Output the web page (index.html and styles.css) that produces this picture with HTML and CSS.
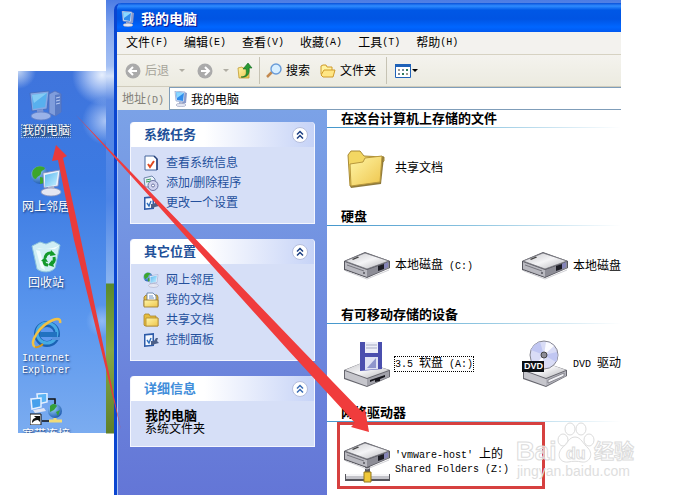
FILE: index.html
```html
<!DOCTYPE html>
<html lang="zh-CN">
<head>
    <meta charset="UTF-8">
    <meta name="viewport" content="width=device-width, initial-scale=1.0">
    <title>我的电脑</title>
    <link rel="stylesheet" href="styles.css">
</head>
<body>

    <!-- Shared icons -->
    <svg class="defs" aria-hidden="true">
        <defs>
            <linearGradient id="g-screen" x1="0" y1="0" x2="1" y2="1">
                <stop offset="0" stop-color="#5cb8f0"/>
                <stop offset="1" stop-color="#c8f0ff"/>
            </linearGradient>
            <linearGradient id="g-folder" x1="0" y1="0" x2="1" y2="1">
                <stop offset="0" stop-color="#fff6a8"/>
                <stop offset="1" stop-color="#eec54c"/>
            </linearGradient>
            <linearGradient id="g-metal" x1="0" y1="0" x2="1" y2="1">
                <stop offset="0" stop-color="#c4c4c8"/>
                <stop offset=".5" stop-color="#f4f4f6"/>
                <stop offset="1" stop-color="#b4b4b8"/>
            </linearGradient>
            <radialGradient id="g-globe" cx=".35" cy=".3" r=".8">
                <stop offset="0" stop-color="#9fd8ff"/>
                <stop offset="1" stop-color="#1450a8"/>
            </radialGradient>
        </defs>
        <symbol id="i-pc" viewBox="0 0 16 16">
            <path d="M10 1l4 1-1 10-4 1z" fill="#8c9ccc"/>
            <path d="M2 0l10 1-1 10-8-1z" fill="#dfe9fb" stroke="#7c90c0" stroke-width=".6"/>
            <path d="M3 1l8 1-1 8-6-1z" fill="#2f8cec"/>
            <path d="M3 1l8 1-7 5z" fill="#8cd8ff"/>
            <path d="M6 11l4 .5V14H6z" fill="#a4aecc"/>
            <ellipse cx="8" cy="14" rx="5" ry="1.700" fill="#e2e6f2" stroke="#8890b0" stroke-width=".5"/>
        </symbol>
        <symbol id="i-net" viewBox="0 0 32 32">
            <circle cx="10" cy="10" r="9" fill="url(#g-globe)"/>
            <path d="M3 5c4-5 9-4 12-2-1 3-4 2-4 5s-4 3-5 6c-3 0-5-5-3-9zM10 12l5 1-1 5-4 1z" fill="#3da62d"/>
            <path d="M13 8l17-3-2 16-14 2z" fill="#eef2fc" stroke="#8088b8" stroke-width=".8"/>
            <path d="M15 10l13-3-2 13-11 2z" fill="url(#g-screen)"/>
            <path d="M18 22l6-1 1 5h-7z" fill="#b8bfd8"/>
            <ellipse cx="21" cy="27" rx="10" ry="4" fill="#e4e6f2" stroke="#9096b8" stroke-width=".8"/>
        </symbol>
        <symbol id="i-folder" viewBox="0 0 16 16">
            <path d="M1 3.500l1-1.500h4l1 2h6v2h2v8H2L1 13z" fill="#e6bd3e" stroke="#a8842c" stroke-width=".8"/>
            <path d="M3 6h12v8H3z" fill="url(#g-folder)" stroke="#b08c30" stroke-width=".8"/>
        </symbol>
        <symbol id="i-panel" viewBox="0 0 16 16">
            <path d="M1 2l10-1v13L1 15z" fill="#2c5aa8"/>
            <path d="M2.500 3.500l7-.6v9.800l-7 .6z" fill="#f4f8ff"/>
            <path d="M4 8l2 3 2-5" fill="none" stroke="#2f6fbc" stroke-width="1.400"/>
            <path d="M8 9h3l2-3h2l-1 3 2 2-4 1-2 1H8z" fill="#4c6088"/>
        </symbol>
        <symbol id="i-drive" viewBox="0 0 48 30">
            <path d="M1 10L22 1l25 9v7L24 27 1 19z" fill="#56565e"/>
            <path d="M2 10l20-8 24 8-22 8z" fill="url(#g-metal)" stroke="#77777f" stroke-width=".8"/>
            <path d="M2 11l22 8v7L2 18z" fill="#b9b9c0"/>
            <path d="M24 19l22-8v6l-22 9z" fill="#8d8d96"/>
            <path d="M35 15l6-2v5l-6 2z" fill="#1c1c24"/>
            <path d="M41 13l4-2v5l-4 2z" fill="#8484b8"/>
            <path d="M9 8l6-2.500 1 1-6 2.500z" fill="#444"/>
            <path d="M4 14l17 6" stroke="#77777f" stroke-width="1"/>
            <circle cx="21" cy="22" r="1" fill="#55555c"/>
            <path d="M3 20l21 8 22-9" fill="none" stroke="#cfcfd4" stroke-width="1"/>
        </symbol>
        <symbol id="i-chevron" viewBox="0 0 16 16">
            <circle cx="8" cy="8" r="7.500" fill="#fff" stroke="#b4bddc" stroke-width="1"/>
            <path d="M5 7.500l3-3 3 3M5 11.500l3-3 3 3" fill="none" stroke="currentColor" stroke-width="1.500"/>
        </symbol>
    </svg>

    <div class="page">
        <div class="desktop">
            <div class="shortcut selected">
                <svg width="34" height="32" viewBox="0 0 34 32">
                    <path d="M20 5l6-3 6 3v18l-6 4-6-3z" fill="#7f9ddc" stroke="#5570b8" stroke-width=".8"/>
                    <path d="M26 6l6-1v18l-6 4z" fill="#587ac4"/>
                    <path d="M27 9l4-1M27 12l4-1M27 15l4-1" stroke="#b9ccf4" stroke-width="1"/>
                    <path d="M1 4l19-2-2 18-15 2z" fill="#86a8e4" stroke="#456ab8" stroke-width=".8"/>
                    <path d="M3 6l15-2-2 14-12 2z" fill="#58b0ee"/>
                    <path d="M3 6l15-2-13 10z" fill="#84cbf4"/>
                    <path d="M8 21l6-1 1 6H8z" fill="#7b95d4"/>
                    <ellipse cx="12" cy="27" rx="10" ry="4" fill="#9ab2e8" stroke="#6280c8" stroke-width=".8"/>
                </svg>
                <span>我的电脑</span>
            </div>
            <div class="shortcut">
                <svg width="32" height="32"><use href="#i-net"/></svg>
                <span>网上邻居</span>
            </div>
            <div class="shortcut">
                <svg width="32" height="32" viewBox="0 0 32 32">
                    <path d="M2 5l8-4 6 2 7-3 7 4-5 23c-4 5-13 5-18 1z" fill="#cfeef4" stroke="#8cc3dc" stroke-width="1"/>
                    <path d="M2 5c7 4 20 4 28-1l-5 4H9z" fill="#f4ffff"/>
                    <path d="M6 9l5 18 4 2-5-19z" fill="#f0fdff"/>
                    <g fill="none" stroke="#129a2b" stroke-width="3">
                        <path d="M15 17c1-5 5-6 8-4"/>
                        <path d="M24 16c1 4-1 6-3 7"/>
                        <path d="M18 24c-3 0-4-2-4-4"/>
                    </g>
                    <path d="M21 9l5 5-6 1zM22 19l-4 5 6 2zM11 20l4-4 3 5z" fill="#129a2b"/>
                </svg>
                <span>回收站</span>
            </div>
            <div class="shortcut">
                <svg width="32" height="32" viewBox="0 0 32 32">
                    <circle cx="17" cy="17" r="10" fill="none" stroke="#1b62b4" stroke-width="6"/>
                    <circle cx="17" cy="16" r="10" fill="none" stroke="#46aae4" stroke-width="3"/>
                    <path d="M10 15h17v5H10z" fill="#2272c0"/>
                    <path d="M22 20h8v3h-8z" fill="#5a94e0"/>
                    <path d="M5 30C-2 26 10 8 23 3c5-2 8-1 7 3" fill="none" stroke="#f2c144" stroke-width="2.500"/>
                    <path d="M5 30c3 1 6-1 8-3" fill="none" stroke="#d49a20" stroke-width="2"/>
                </svg>
                <span class="latin">Internet<br>Explorer</span>
            </div>
            <div class="shortcut">
                <svg width="32" height="32" viewBox="0 0 32 32">
                    <path d="M18 6h7v7M12 28h8" fill="none" stroke="#111" stroke-width="1.500"/>
                    <path d="M7 1l10-1v9L8 11z" fill="#5cb4f4" stroke="#e4efff" stroke-width="1.500"/>
                    <path d="M1 6l10-1v9L2 16z" fill="#46a0ec" stroke="#e4efff" stroke-width="1.500"/>
                    <path d="M3 17l11-2 2 3-11 2z" fill="#dfe4f4"/>
                    <circle cx="25" cy="18" r="7" fill="url(#g-globe)"/>
                    <path d="M20 13c3-3 6-2 7 0l-3 4-4 2zM26 19l4-2-2 6z" fill="#35a03a"/>
                    <path d="M19 28h13M25 25v3" stroke="#f2dc78" stroke-width="3"/>
                    <path d="M0 21h11v11H0z" fill="#fff" stroke="#111" stroke-width="1"/>
                    <path d="M2 30c0-4 2-5 4-5l-2-2h6v6l-2-2c-3 0-4 1-6 3z" fill="#111"/>
                </svg>
                <span>宽带连接</span>
            </div>
        </div>

        <div class="backdrop">
            <div class="window">
                <header class="title-bar">
                    <svg width="16" height="16"><use href="#i-pc"/></svg>
                    <h1>我的电脑</h1>
                </header>

                <nav class="menu-bar">
                    <button>文件<span class="latin">(F)</span></button>
                    <button>编辑<span class="latin">(E)</span></button>
                    <button>查看<span class="latin">(V)</span></button>
                    <button>收藏<span class="latin">(A)</span></button>
                    <button>工具<span class="latin">(T)</span></button>
                    <button>帮助<span class="latin">(H)</span></button>
                </nav>

                <div class="toolbar">
                    <button class="back" disabled>
                        <svg width="16" height="16" viewBox="0 0 16 16">
                            <circle cx="8" cy="8" r="7.500" fill="#aaa"/>
                            <path d="M12 8H5M8 4L4 8l4 4" fill="none" stroke="#fff" stroke-width="2"/>
                        </svg>
                        后退
                        <i class="caret"></i>
                    </button>
                    <button class="forward" disabled aria-label="前进">
                        <svg width="16" height="16" viewBox="0 0 16 16">
                            <circle cx="8" cy="8" r="7.500" fill="#aaa"/>
                            <path d="M4 8h7M8 4l4 4-4 4" fill="none" stroke="#fff" stroke-width="2"/>
                        </svg>
                        <i class="caret"></i>
                    </button>
                    <button class="up" aria-label="向上">
                        <svg width="16" height="16" viewBox="0 0 16 16">
                            <path d="M1 5l4-1 1 1h6v10H2z" fill="url(#g-folder)" stroke="#c09a30" stroke-width=".8"/>
                            <path d="M4 14c5 0 6-3 5-8H6l5-6 4 5h-3c1 6-2 10-8 9z" fill="#2a9a34" stroke="#14691e" stroke-width=".6"/>
                        </svg>
                    </button>
                    <button class="search">
                        <svg width="16" height="16" viewBox="0 0 16 16">
                            <path d="M6 9l-5 5" stroke="#c48a50" stroke-width="2.500"/>
                            <circle cx="10" cy="6" r="5" fill="#d8efff" stroke="#6a9cd8" stroke-width="1.400"/>
                        </svg>
                        搜索
                    </button>
                    <button class="folders">
                        <svg width="16" height="16" viewBox="0 0 16 16">
                            <path d="M1 11V3l2-1h3l1 2h5v3" fill="#fff3a0" stroke="#d09a28" stroke-width="1"/>
                            <path d="M1 12l3-5h11l-2 7H3z" fill="#ffe684" stroke="#d09a28" stroke-width="1"/>
                        </svg>
                        文件夹
                    </button>
                    <button class="views" aria-label="查看方式">
                        <svg width="16" height="16" viewBox="0 0 16 16">
                            <path d="M.5 1.500h15v13H.5z" fill="#fff" stroke="#1f62b8"/>
                            <path d="M0 1h16v3H0z" fill="#1f62b8"/>
                            <path d="M3 6h2v2H3zM11 10h2v2h-2z" fill="#a09a90"/>
                            <path d="M7 6h2v2H7zM3 10h2v2H3z" fill="#7a8a9c"/>
                            <path d="M11 6h2v2h-2zM7 10h2v2H7z" fill="#2f7c5c"/>
                        </svg>
                        <i class="caret dark"></i>
                    </button>
                </div>

                <div class="address-bar">
                    <label for="address">地址<span class="latin">(D)</span></label>
                    <div class="address-field">
                        <svg width="16" height="16"><use href="#i-pc"/></svg>
                        <input id="address" type="text" value="我的电脑">
                    </div>
                </div>

                <div class="content">
                    <aside class="sidebar">
                        <section class="card">
                            <header>
                                <h2>系统任务</h2>
                                <button aria-label="折叠"><svg width="16" height="16"><use href="#i-chevron"/></svg></button>
                            </header>
                            <ul>
                                <li><a href="#">
                                    <svg width="16" height="16" viewBox="0 0 16 16">
                                        <path d="M2 1h9l3 3v11H2z" fill="#fff" stroke="#47679c"/>
                                        <path d="M11 1l3 3v11" fill="none" stroke="#233f78" stroke-width="1.500"/>
                                        <path d="M5 9l2 3 4-6" fill="none" stroke="#e04a20" stroke-width="2"/>
                                    </svg>
                                    查看系统信息</a></li>
                                <li><a href="#">
                                    <svg width="16" height="16" viewBox="0 0 16 16">
                                        <path d="M1 3l8-2 3 3v8H2z" fill="#e8f0fa" stroke="#6f86ac"/>
                                        <path d="M3 5l5-1M3 7l5-1" stroke="#3ca05c"/>
                                        <circle cx="10" cy="10.500" r="5" fill="#cfd2ee" stroke="#6c74a4"/>
                                        <circle cx="10" cy="10.500" r="1.500" fill="#fff" stroke="#6c74a4"/>
                                    </svg>
                                    添加/删除程序</a></li>
                                <li><a href="#"><svg width="16" height="16"><use href="#i-panel"/></svg>更改一个设置</a></li>
                            </ul>
                        </section>

                        <section class="card">
                            <header>
                                <h2>其它位置</h2>
                                <button aria-label="折叠"><svg width="16" height="16"><use href="#i-chevron"/></svg></button>
                            </header>
                            <ul>
                                <li><a href="#"><svg width="16" height="16"><use href="#i-net"/></svg>网上邻居</a></li>
                                <li><a href="#">
                                    <svg width="16" height="16" viewBox="0 0 16 16">
                                        <path d="M1 5l2-2h11l1 2v9H1z" fill="#e8c048" stroke="#97752a" stroke-width=".8"/>
                                        <path d="M4 1h6l3 3v7H4z" fill="#fff" stroke="#56749c" stroke-width=".8"/>
                                        <path d="M6 4h4M6 6h5" stroke="#6a90c4"/>
                                        <path d="M1 8h14v7H1z" fill="url(#g-folder)" stroke="#97752a" stroke-width=".8"/>
                                    </svg>
                                    我的文档</a></li>
                                <li><a href="#"><svg width="16" height="16"><use href="#i-folder"/></svg>共享文档</a></li>
                                <li><a href="#"><svg width="16" height="16"><use href="#i-panel"/></svg>控制面板</a></li>
                            </ul>
                        </section>

                        <section class="card details">
                            <header>
                                <h2>详细信息</h2>
                                <button aria-label="折叠"><svg width="16" height="16"><use href="#i-chevron"/></svg></button>
                            </header>
                            <p><strong>我的电脑</strong></p>
                            <p>系统文件夹</p>
                        </section>
                    </aside>

                    <main class="files">
                        <section class="group">
                            <h2>在这台计算机上存储的文件</h2>
                            <div class="items">
                                <div class="item">
                                    <svg width="48" height="48" viewBox="0 0 48 48">
                                        <path d="M5 11l3-4h9l4 5 20 1v4L12 41l-5 1z" fill="#f3d763" stroke="#a98a34"/>
                                        <path d="M39 12l2 1-3 27L8 44l-1-2z" fill="#8f7a3c"/>
                                        <path d="M7 20l13-2 2-4 17-2-2 26L8 42z" fill="url(#g-folder)" stroke="#b8983c"/>
                                    </svg>
                                    <span>共享文档</span>
                                </div>
                            </div>
                        </section>

                        <section class="group">
                            <h2>硬盘</h2>
                            <div class="items">
                                <div class="item">
                                    <svg width="48" height="30"><use href="#i-drive"/></svg>
                                    <span>本地磁盘<span class="latin"> (C:)</span></span>
                                </div>
                                <div class="item">
                                    <svg width="48" height="30"><use href="#i-drive"/></svg>
                                    <span>本地磁盘</span>
                                </div>
                            </div>
                        </section>

                        <section class="group">
                            <h2>有可移动存储的设备</h2>
                            <div class="items">
                                <div class="item">
                                    <svg width="48" height="48" viewBox="0 0 48 48">
                                        <path d="M1 30l20-8 26 8v7L24 47 1 39z" fill="#66666e"/>
                                        <path d="M2 30l19-8 25 8-22 8z" fill="url(#g-metal)"/>
                                        <path d="M2 31l22 8v7L2 38z" fill="#c6c6cc"/>
                                        <path d="M24 39l22-8v6l-22 9z" fill="#a2a2aa"/>
                                        <path d="M27 40l15-5v2l-5 2v2l-5 1v-2l-5 2z" fill="#15151c"/>
                                        <path d="M17 2h22v27l-22 2z" fill="#4a4fae"/>
                                        <path d="M22 2h13v11H22z" fill="#eceef8"/>
                                        <path d="M23 5h11M23 8h11" stroke="#a7abc4"/>
                                        <path d="M22 17h13v12l-13 1z" fill="#dfe3f4"/>
                                        <path d="M24 28l9-10v10z" fill="#8e96cc"/>
                                    </svg>
                                    <span class="focused"><span class="latin">3.5 </span>软盘<span class="latin"> (A:)</span></span>
                                </div>
                                <div class="item">
                                    <svg width="48" height="48" viewBox="0 0 48 48">
                                        <path d="M2 30l20-8 24 8v6L25 47 2 39z" fill="#66666e"/>
                                        <path d="M3 30l19-8 23 8-20 8z" fill="url(#g-metal)"/>
                                        <path d="M3 31l22 8v7L3 38z" fill="#c6c6cc"/>
                                        <path d="M25 39l20-8v5l-20 10z" fill="#b4b4bc"/>
                                        <path d="M27 40l16-7v3l-16 7z" fill="#f2f2f6" stroke="#77777f" stroke-width=".8"/>
                                        <circle cx="23" cy="15" r="14" fill="#d9dcf6" stroke="#85858f"/>
                                        <path d="M23 15L10 10a14 14 0 0 1 9-8zM23 15l12 7a14 14 0 0 0 1-10z" fill="#c0c6f2"/>
                                        <path d="M23 15l2-13a14 14 0 0 1 8 4zM23 15l-3 13a14 14 0 0 1-6-3z" fill="#fbfbff"/>
                                        <circle cx="23" cy="15" r="3" fill="#8c8c96" stroke="#444"/>
                                        <path d="M1 21h22v11H1z" fill="#0c1014"/>
                                        <text class="badge" x="3" y="29">DVD</text>
                                    </svg>
                                    <span><span class="latin">DVD </span>驱动</span>
                                </div>
                            </div>
                        </section>

                        <section class="group">
                            <h2>网络驱动器</h2>
                            <div class="items">
                                <div class="item">
                                    <svg width="48" height="48" viewBox="0 0 48 48">
                                        <path d="M22 26h5v8h-5z" fill="#5c5c64"/>
                                        <svg width="48" height="30" y="3"><use href="#i-drive"/></svg>
                                        <path d="M2 36h45v7H2z" fill="#55555c"/>
                                        <path d="M3 36h43v5H3z" fill="#c4c4ca"/>
                                        <path d="M3 37h43" stroke="#f4f4f6" stroke-width="2"/>
                                        <path d="M21 34h7v10h-7z" fill="#f0c838" stroke="#94781c"/>
                                    </svg>
                                    <span><span class="latin">'vmware-host' </span>上的<br><span class="latin">Shared Folders (Z:)</span></span>
                                </div>
                            </div>
                        </section>
                    </main>
                </div>
            </div>
        </div>

        <!-- Arrows, highlight frame and watermark over the page -->
        <svg class="overlay" width="673" height="495" viewBox="0 0 673 495" aria-hidden="true">
            <path d="M338.500 423.500h205v64h-205z" fill="none" stroke="#d6403f" stroke-width="3"/>
            <path d="M56 145l11 11-4 2 18 82 40 190-47-190-16-80-6 1z" fill="#e93b3b"/>
            <path d="M76 115L187 230l115 120 60 62 3-3 4 23-18-5 4-4-67-73L180 230z" fill="#f03c3c"/>
            <g class="watermark">
                <text class="brand" x="516" y="460">Bai</text>
                <ellipse cx="563" cy="440" rx="5" ry="6"/>
                <ellipse cx="570" cy="429" rx="5" ry="6"/>
                <ellipse cx="581" cy="429" rx="5" ry="6"/>
                <ellipse cx="589" cy="440" rx="5" ry="6"/>
                <path d="M575 437c6 0 8 7 13 11 6 7 1 15-6 14-5-1-9-1-14 0-8 1-12-7-6-14 5-4 7-11 13-11z"/>
                <text class="du" x="566" y="459">du</text>
                <text class="brand-cn" x="594" y="459">经验</text>
                <text class="site" x="517" y="476">jingyan.baidu.com</text>
            </g>
        </svg>
    </div>

</body>
</html>
```
FILE: styles.css
```css
* {
    box-sizing: border-box;
}

body {
    margin: 0;
    background: #fff;
    color: #000;
    font-family: "Liberation Sans", "Noto Sans CJK SC", sans-serif;
    font-size: 12px;
    line-height: 12px;
    overflow: hidden;
}

h1, h2, p, ul {
    margin: 0;
    padding: 0;
}

svg {
    display: block;
    flex: none;
}

button {
    display: flex;
    align-items: center;
    padding: 0;
    border: 0;
    background: none;
    color: inherit;
    font: inherit;
    white-space: nowrap;
}

.defs {
    position: absolute;
    width: 0;
    height: 0;
}

/* Narrow Latin text, half the width of a Chinese character */
.latin {
    font-family: "Liberation Mono", monospace;
    font-size: 10px;
}

.page {
    position: relative;
    display: grid;
    grid-template-columns: 88px minmax(0, 1fr);
    height: 100vh;
    padding: 0 52px 0 18px;
}

/* Desktop */
.desktop {
    display: grid;
    grid-auto-rows: 76px;
    align-content: start;
    height: 362px;
    margin-top: 71px;
    padding-top: 18px;
    overflow: hidden;
    background:
        radial-gradient(circle at 84px 4px, rgba(240, 246, 255, .95) 0, rgba(220, 232, 255, .6) 14px, transparent 30px),
        radial-gradient(circle at 88px 50px, rgba(220, 232, 255, .7) 0, transparent 24px),
        radial-gradient(circle at 0 0, #c4d6f4 0, transparent 18px),
        radial-gradient(circle at 84px 250px, rgba(200, 222, 255, .5) 0, transparent 16px),
        linear-gradient(#3f74dc, #3c7ae2 30%, #5c98ee 70%, #7bacf0);
}

.shortcut {
    display: flex;
    flex-direction: column;
    align-items: center;
    gap: 4px;
    width: 56px;
    color: #fff;
    text-align: center;
    text-shadow: 1px 1px 2px #123068;
    white-space: nowrap;
}

.selected span {
    background: #3a68a8;
    outline: 1px dotted #9ab4d8;
}

.backdrop {
    min-width: 0;
    padding: 3px 0 0 8px;
    background: linear-gradient(#4c7ce4, #86a8ee 30px, #a4c0f4 66px, #d4e2fa 76px, #5c8ae4 100px, #4c84e6 200px, #8ab4f0 283px, #5a8a2c 284px, #86a846 350px, #5f7f2a 433px, #fff 434px);
}

/* Explorer window */
.window {
    display: flex;
    flex-direction: column;
    height: 100%;
    overflow: hidden;
    border-left: 3px solid #0a45d0;
    border-top-left-radius: 7px;
}

.title-bar {
    display: flex;
    align-items: center;
    gap: 5px;
    flex: none;
    height: 29px;
    padding: 2px 0 0 3px;
    background: linear-gradient(#0a50d8, #2f8cff 3px, #0058e6 7px, #0054e3 16px, #0066ff 24px, #0058f0);
    color: #fff;
    text-shadow: 1px 1px 1px #0f1089;
}

.title-bar h1 {
    font-size: 14px;
    line-height: 14px;
}

.menu-bar {
    display: flex;
    flex: none;
    gap: 16px;
    height: 23px;
    padding-left: 9px;
    background: #f3f2ee;
    border-bottom: 1px solid #d6d2c2;
}

.toolbar {
    display: flex;
    align-items: center;
    flex: none;
    height: 32px;
    padding-left: 8px;
    background: linear-gradient(#f4f3ee, #ecebe0);
    border-bottom: 1px solid #d0ccbc;
}

.toolbar button {
    gap: 4px;
    height: 27px;
}

.toolbar button:disabled {
    color: #a6a49a;
}

.caret {
    border: 3px solid transparent;
    border-top-color: #b0aea4;
    border-bottom: 0;
}

.caret.dark {
    border-top-color: #000;
}

.back .caret,
.forward .caret {
    margin-left: 6px;
}

.toolbar .back {
    margin-right: 12px;
}

.toolbar .forward {
    margin-right: 8px;
}

.toolbar .up {
    padding-right: 6px;
    border-right: 1px solid #c6c3b4;
}

.toolbar .search {
    padding: 0 10px 0 6px;
}

.toolbar .folders {
    padding-right: 10px;
    border-right: 1px solid #c6c3b4;
}

.toolbar .views {
    gap: 1px;
    padding-left: 8px;
}

.address-bar {
    display: flex;
    align-items: stretch;
    flex: none;
    height: 23px;
    background: #ecebe3;
}

.address-bar label {
    width: 52px;
    padding: 6px 0 0 5px;
    color: #828078;
    white-space: nowrap;
}

.address-field {
    display: flex;
    flex: 1;
    align-items: center;
    gap: 2px;
    min-width: 0;
    padding-left: 3px;
    border: 1px solid #7f9db9;
    border-right: 0;
    background: #fff;
}

.address-field input {
    flex: 1;
    min-width: 0;
    padding: 0;
    border: 0;
    outline: 0;
    background: none;
    font: inherit;
}

.content {
    display: grid;
    grid-template-columns: 210px minmax(0, 1fr);
    flex: 1;
    min-height: 0;
}

/* Task pane */
.sidebar {
    display: flex;
    flex-direction: column;
    gap: 15px;
    padding: 12px 12px 0 12px;
    border-left: 1px solid #a9c4f4;
    background: linear-gradient(#7ba2e7, #6375d6);
}

.card {
    border: 1px solid #f4f6fe;
    border-top: 0;
    border-radius: 4px 4px 0 0;
    background: #d6dff7;
}

.card header {
    display: flex;
    align-items: center;
    justify-content: space-between;
    height: 25px;
    padding: 0 6px 0 13px;
    border-radius: 4px 4px 0 0;
    background: linear-gradient(90deg, #fff 40%, #c6d3f7);
}

.card h2 {
    color: #215099;
    font-size: 13px;
    line-height: 14px;
}

.card header button {
    color: #1c3f82;
}

.card ul {
    padding: 6px 0 10px 12px;
    list-style: none;
}

.card a {
    display: flex;
    align-items: center;
    gap: 7px;
    height: 20px;
    color: #24509c;
    text-decoration: none;
}

.card.details {
    padding-bottom: 10px;
}

.details header {
    margin-bottom: 8px;
}

.details h2 {
    color: #428eda;
}

.details header button {
    color: #3a6cb4;
}

.details p {
    padding-left: 14px;
    line-height: 13px;
}

.details strong {
    font-size: 13px;
}

/* File list */
.files {
    overflow: hidden;
    background: #fff;
}

.group h2 {
    height: 18px;
    padding: 2px 0 0 14px;
    background: linear-gradient(90deg, #4496cc, #8cc4e0 50%, #fff) bottom / 100% 1px no-repeat;
    font-size: 13px;
    line-height: 14px;
    white-space: nowrap;
}

.items {
    display: grid;
    grid-template-columns: repeat(2, 178px);
    align-items: center;
    height: 80px;
    padding-left: 16px;
}

.item {
    display: flex;
    align-items: center;
    gap: 4px;
    white-space: nowrap;
}

.focused {
    outline: 1px dotted #000;
}

.badge {
    fill: #fff;
    font-size: 9px;
    font-weight: bold;
}

/* Things drawn over the page */
.overlay {
    position: absolute;
    top: 0;
    left: 0;
    pointer-events: none;
}

.watermark {
    fill: rgba(255, 255, 255, .6);
    stroke: #dcdcdc;
    stroke-width: 1px;
}

.watermark .brand {
    font-size: 26px;
    font-weight: bold;
}

.watermark .du {
    font-size: 16px;
    font-weight: bold;
}

.watermark .brand-cn {
    font-size: 20px;
    font-weight: bold;
}

.watermark .site {
    fill: #dedede;
    stroke: none;
    font-size: 14px;
}
```
